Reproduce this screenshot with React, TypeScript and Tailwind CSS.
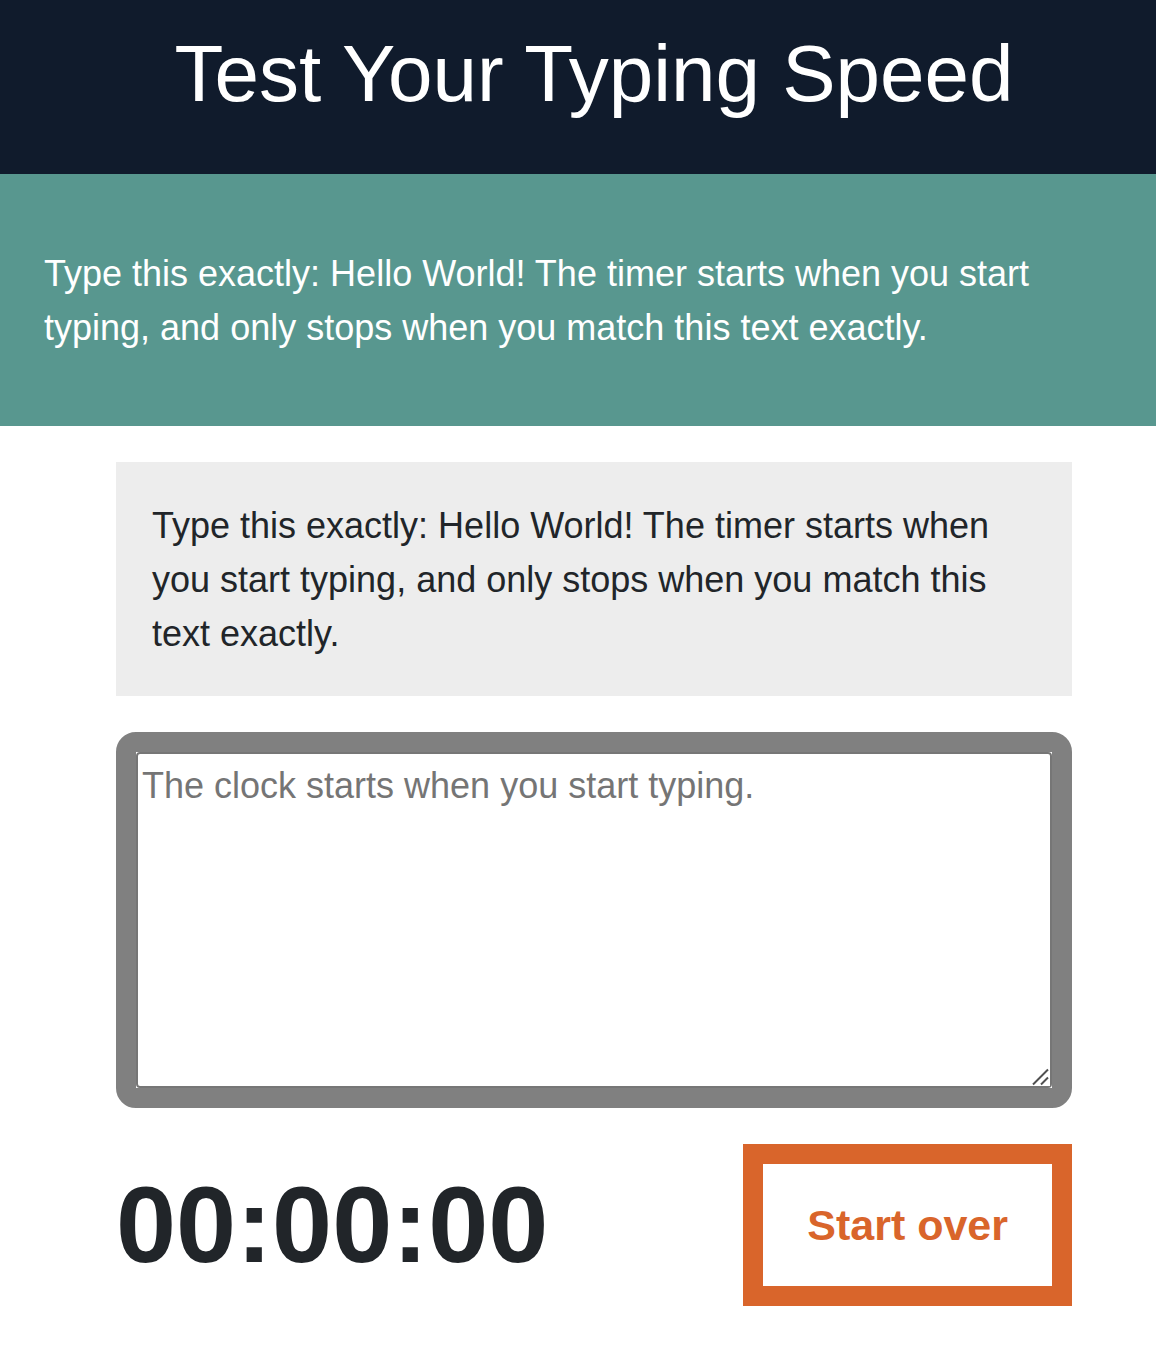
import { useEffect, useState } from "react";

const originText =
  "Type this exactly: Hello World! The timer starts when you start typing, and only stops when you match this text exactly.";

const pad = (value: number) => String(value).padStart(2, "0");

function formatTime(hundredths: number) {
  const minutes = Math.floor(hundredths / 6000);
  const seconds = Math.floor(hundredths / 100) % 60;
  return `${pad(minutes)}:${pad(seconds)}:${pad(hundredths % 100)}`;
}

export default function App() {
  const [text, setText] = useState("");
  const [elapsed, setElapsed] = useState(0);
  const running = text.length > 0 && text !== originText;

  useEffect(() => {
    if (!running) return;
    const timer = setInterval(() => setElapsed((value) => value + 1), 10);
    return () => clearInterval(timer);
  }, [running]);

  const reset = () => {
    setText("");
    setElapsed(0);
  };

  return (
    <div className="min-h-screen bg-white font-['Liberation_Sans',Arial,sans-serif] text-4xl leading-[54px] text-[#212529]">
      <header className="bg-[#101b2c] pt-3.5 pr-10 pb-10 pl-[72px] text-center text-white">
        <h1 className="text-[80px] leading-[120px] font-normal">Test Your Typing Speed</h1>
      </header>
      <main>
        <article className="bg-[#58978f] px-11 pt-[73px] pb-[71px] text-white">
          <p>{originText}</p>
        </article>
        <section className="pt-9 pr-[84px] pb-12 pl-[116px]">
          <div className="bg-[#ededed] px-9 pt-[37px] pb-[35px]">
            <p>{originText}</p>
          </div>
          <div className="mt-9 rounded-[20px] border-[20px] border-[#808080] bg-[#808080]">
            <div className="relative flex bg-white">
              <textarea
                aria-label="Typing area"
                className="h-[336px] w-full resize-y rounded-[4px] border-2 border-[#767676] bg-white px-1 pt-[5px] pb-1 outline-none placeholder:text-[#757575]"
                placeholder="The clock starts when you start typing."
                value={text}
                onChange={(event) => setText(event.target.value)}
              />
              <svg
                aria-hidden="true"
                className="pointer-events-none absolute right-0.5 bottom-0.5 size-[18px] bg-white"
                viewBox="0 0 18 18"
                fill="none"
                stroke="#505050"
                strokeWidth="2"
              >
                <path d="M1 16.5 16 1.5M9 16.5 16 9.5" />
              </svg>
            </div>
          </div>
          <div className="mt-9 flex items-center justify-between">
            <div role="timer" className="text-[108px] leading-[162px] font-bold">
              {formatTime(elapsed)}
            </div>
            <button
              type="button"
              onClick={reset}
              className="border-[20px] border-[#d9652b] bg-white px-11 py-9 text-[43px] leading-[50px] font-bold text-[#d9652b]"
            >
              Start over
            </button>
          </div>
        </section>
      </main>
    </div>
  );
}
